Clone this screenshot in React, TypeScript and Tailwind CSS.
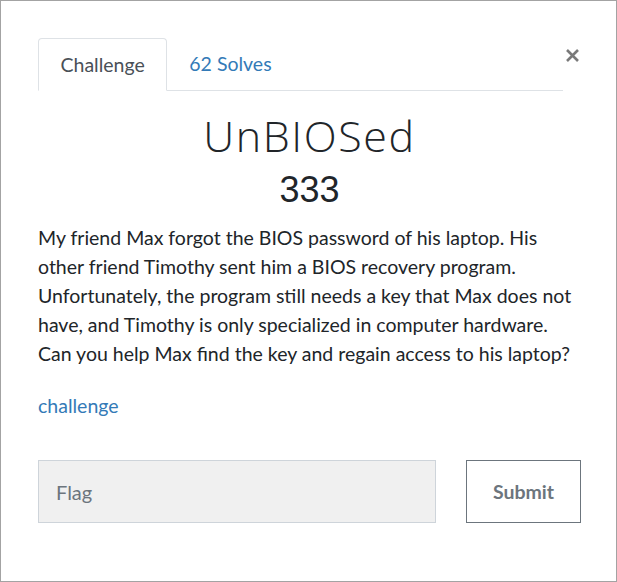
export default function App() {
  return (
    <div className="h-screen w-full border border-[#a3a3a3] bg-white font-['Lato',sans-serif] text-[#212529]">
      <div className="pl-[37px] pr-[35px] pt-[37px]">
        <div className="flex items-start">
          <ul className="flex flex-1 border-b border-[#dee2e6] text-[19.5px] leading-[27px]">
            <li className="-mb-px rounded-t-[4px] border border-[#dee2e6] border-b-white bg-white px-[21.5px] py-3 text-[#495057]">
              Challenge
            </li>
            <li className="px-[22px] py-3 text-[#337ab7]">62 Solves</li>
          </ul>
          <button className="ml-[1px] mr-[1px] mt-[7px] flex h-[20px] w-[16px] items-center justify-center text-[#7a7a7a]">
            <svg width="15" height="15" viewBox="0 0 15 15">
              <path d="M2 2 L13 13 M13 2 L2 13" stroke="currentColor" strokeWidth="2.6" />
            </svg>
          </button>
        </div>

        <h2 className="mt-[20px] text-center font-['Open_Sans',sans-serif] text-[43px] font-light leading-[50px] tracking-[1.6px]">
          UnBIOSed
        </h2>
        <h3 className="mt-[8px] text-center font-['Liberation_Sans',Arial,sans-serif] text-[36px] leading-[42px]">
          333
        </h3>

        <p className="mt-[12px] text-[19.5px] leading-[29px]">
          My friend Max forgot the BIOS password of his laptop. His other friend Timothy sent him a BIOS
          recovery program. Unfortunately, the program still needs a key that Max does not have, and
          Timothy is only specialized in computer hardware. Can you help Max find the key and regain
          access to his laptop?
        </p>

        <div className="mt-[23px] text-[19.5px] leading-[29px] text-[#337ab7]">challenge</div>

        <div className="mt-[40px] flex gap-[30px]">
          <input
            placeholder="Flag"
            className="h-[63px] w-[398px] border border-[#ced4da] bg-[#f0f0f0] px-[17px] text-[20px] outline-none placeholder:text-[#6c757d]"
          />
          <button className="h-[63px] w-[115px] border border-[#6c757d] text-[19.5px] font-bold text-[#6c757d]">
            Submit
          </button>
        </div>
      </div>
    </div>
  );
}
